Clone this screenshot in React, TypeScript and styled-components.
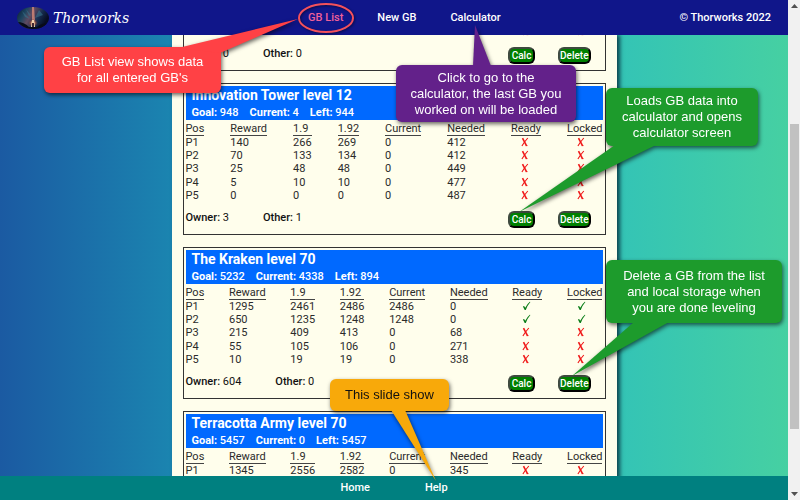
import React from "react";
import styled, { createGlobalStyle } from "styled-components";

const GlobalStyle = createGlobalStyle`
  * { box-sizing: border-box; }
  html, body { margin: 0; padding: 0; overflow: hidden; }
  body { font-family: Roboto, "Liberation Sans", sans-serif; font-size: 11px; color: #2b2b2b; }
`;

const Window = styled.div`
  position: relative;
  display: flex;
  height: 100vh;
`;

const Page = styled.div`
  flex: 1;
  min-width: 0;
  display: flex;
  flex-direction: column;
  background: linear-gradient(to right, #1b5aa2 0%, #1b85b0 22%, #34c4b5 79%, #46d0a2 100%);
`;

const Header = styled.header`
  flex: none;
  height: 35px;
  padding: 0 17px;
  display: flex;
  align-items: center;
  justify-content: space-between;
  background: #10168a;
  color: #fff;
  font-weight: 500;
`;

const Brand = styled.a`
  display: flex;
  align-items: center;
  gap: 4px;
  color: #fff;
  text-decoration: none;
  font: italic 14px/16px "DejaVu Serif", serif;
`;

const Nav = styled.nav<{ $gap: number }>`
  display: flex;
  gap: ${(p) => p.$gap}px;
`;

const NavLink = styled.a<{ $active?: boolean }>`
  position: relative;
  color: ${(p) => (p.$active ? "#f0609a" : "#fff")};
  text-decoration: none;
  font-weight: 500;
  line-height: 16px;
`;

const Main = styled.main`
  flex: 1;
  min-height: 0;
  overflow: hidden;
  display: flex;
  justify-content: center;
  align-items: flex-start;
`;

const List = styled.div`
  width: 445px;
  max-width: 100%;
  padding: 0 11px;
  display: flex;
  flex-direction: column;
  gap: 12px;
  background: #fffeec;
  box-shadow: 3px 0 4px rgba(0, 30, 50, 0.75);
`;

const Card = styled.section<{ $scrolled: boolean }>`
  height: ${(p) => (p.$scrolled ? 46 : 152)}px;
  margin-top: ${(p) => (p.$scrolled ? -10 : 0)}px;
  padding: ${(p) => (p.$scrolled ? "0 2px 2px" : "2px")};
  border: 1px solid #333;
  border-top-width: ${(p) => (p.$scrolled ? 0 : 1)}px;
`;

const CardHead = styled.div`
  height: 34px;
  padding: 0 6px;
  background: #0069ff;
  color: #fff;
`;

const Title = styled.h2`
  margin: 0;
  font-size: 14px;
  line-height: 18px;
  font-weight: 700;
`;

const Facts = styled.div`
  display: flex;
  gap: 11px;
  line-height: 17px;
  font-weight: 500;
  b { font-weight: 700; }
`;

const Table = styled.table<{ $scrolled: boolean }>`
  display: grid;
  grid-template-columns: ${(p) => (p.$scrolled ? "44fr 61fr 49fr 49fr 61fr 62fr 55fr 36fr" : "repeat(8, auto)")};
  grid-template-rows: ${(p) => (p.$scrolled ? "13px" : "16px repeat(5, 1fr)")};
  justify-content: space-between;
  height: ${(p) => (p.$scrolled ? 13 : 82)}px;
  font-size: 11px;
  line-height: 13px;

  thead, tbody, tr { display: contents; }
  td { padding: 0; }
`;

const HeadCell = styled.th`
  padding: 2px 0 0;
  border-bottom: 1px solid #444;
  font-weight: 400;
  text-align: left;
`;

const MarkCell = styled.td`
  && { padding: 1px 0 0 10px; }
  svg { display: block; }
`;

const CardFoot = styled.div`
  display: flex;
  align-items: flex-start;
  gap: 34px;
  padding: 9px 12px 0 0;
  color: #111;
  line-height: 14px;
  b { font-weight: 500; }
`;

const Actions = styled.div`
  display: flex;
  gap: 23px;
  margin-left: auto;
`;

const ActionButton = styled.button`
  min-width: 27px;
  height: 17px;
  padding: 0;
  border: 2px outset #3f4a3f;
  border-radius: 6px;
  background: #008000;
  color: #fff;
  font: 500 10px/12px Roboto, "Liberation Sans", sans-serif;
`;

const Footer = styled.footer`
  flex: none;
  height: 24px;
  display: flex;
  align-items: center;
  justify-content: center;
  background: #008080;
`;

const Scrollbar = styled.div`
  width: 12px;
  display: flex;
  flex-direction: column;
  align-items: center;
  justify-content: space-between;
  padding: 4px 0;
  background: #f1f1f1;
`;

const Track = styled.div`
  flex: 1;
  width: 9px;
  display: grid;
  grid-template-rows: 24fr 63fr 13fr;
`;

const Thumb = styled.div`
  grid-row: 2;
  background: #c1c1c1;
`;

const Callout = styled.aside<{ $x: number; $y: number; $w: number; $h: number; $color: string; $text?: string }>`
  position: absolute;
  left: ${(p) => p.$x}px;
  top: ${(p) => p.$y}px;
  width: ${(p) => p.$w}px;
  height: ${(p) => p.$h}px;
  display: flex;
  align-items: center;
  justify-content: center;
  border-radius: 6px;
  background: ${(p) => p.$color};
  color: ${(p) => p.$text ?? "#fff"};
  font: 13px/16px "Liberation Sans", Arial, sans-serif;
  text-align: center;
  white-space: pre-line;
  filter: drop-shadow(1px 2px 2px rgba(0, 0, 0, 0.6));
  pointer-events: none;
`;

const Tail = styled.svg`
  position: absolute;
  left: 0;
  top: 0;
  width: 1px;
  height: 1px;
  overflow: visible;
`;

const Ring = styled.svg`
  position: absolute;
  left: 50%;
  top: 50%;
  transform: translate(-50%, -50%);
  filter: drop-shadow(1px 1px 1px rgba(0, 0, 0, 0.5));
`;

type Row = [string, number, number, number, number, number, boolean];
type Building = {
  name?: string;
  goal?: number;
  current?: number;
  left?: number;
  owner?: number;
  other?: number;
  rows: Row[];
};

const buildings: Building[] = [
  {
    owner: 0, other: 0,
    rows: [["P5", 15, 29, 29, 0, 1082, false]],
  },
  {
    name: "Innovation Tower level 12", goal: 948, current: 4, left: 944, owner: 3, other: 1,
    rows: [
      ["P1", 140, 266, 269, 0, 412, false],
      ["P2", 70, 133, 134, 0, 412, false],
      ["P3", 25, 48, 48, 0, 449, false],
      ["P4", 5, 10, 10, 0, 477, false],
      ["P5", 0, 0, 0, 0, 487, false],
    ],
  },
  {
    name: "The Kraken level 70", goal: 5232, current: 4338, left: 894, owner: 604, other: 0,
    rows: [
      ["P1", 1295, 2461, 2486, 2486, 0, true],
      ["P2", 650, 1235, 1248, 1248, 0, true],
      ["P3", 215, 409, 413, 0, 68, false],
      ["P4", 55, 105, 106, 0, 271, false],
      ["P5", 10, 19, 19, 0, 338, false],
    ],
  },
  {
    name: "Terracotta Army level 70", goal: 5457, current: 0, left: 5457,
    rows: [["P1", 1345, 2556, 2582, 0, 345, false]],
  },
];

const columns = ["Pos", "Reward", "1.9", "1.92", "Current", "Needed", "Ready", "Locked"];

const Mark = ({ ok }: { ok: boolean }) =>
  ok ? (
    <svg width="9" height="10" viewBox="0 0 8 10" role="img" aria-label="yes">
      <path d="M0.4 5.6 L1.6 5.1 L2.7 6.8 Q4.5 3.2 7.3 0.8 L7.9 1.1 Q4.9 4.5 3.3 9 L2.2 9 Z" fill="#0a7d18" />
    </svg>
  ) : (
    <svg width="8" height="10" viewBox="0 0 8 10" role="img" aria-label="no">
      <path d="M1.5 1.2 Q3 4 5.6 8.8" fill="none" stroke="#f01818" strokeWidth="1.6" />
      <path d="M6.8 1 Q3.6 4.6 0.9 9" fill="none" stroke="#f01818" strokeWidth="1.1" />
      <path d="M4.8 8.6 H6.4" fill="none" stroke="#f01818" strokeWidth="1" />
    </svg>
  );

const Logo = () => (
  <svg width="32" height="22" viewBox="0 0 32 22" aria-hidden="true">
    <defs>
      <linearGradient id="sky" x1="0" x2="1" y1="0" y2="0.4">
        <stop offset="0" stopColor="#0a1830" />
        <stop offset="0.3" stopColor="#1d4560" />
        <stop offset="0.5" stopColor="#604a60" />
        <stop offset="0.75" stopColor="#162d50" />
        <stop offset="1" stopColor="#070c22" />
      </linearGradient>
      <radialGradient id="glow">
        <stop offset="0" stopColor="#ffe0b8" />
        <stop offset="0.4" stopColor="#a8604c" />
        <stop offset="1" stopColor="#60303c" stopOpacity="0" />
      </radialGradient>
      <clipPath id="oval"><ellipse cx="16" cy="11" rx="16" ry="11" /></clipPath>
    </defs>
    <g clipPath="url(#oval)">
      <rect width="32" height="22" fill="url(#sky)" />
      <path d="M5 4 L13 12 L8 10 Z M9 2 L14 8 L12 9 Z M22 3 L18 11 L26 8 Z" fill="#39718a" opacity="0.6" />
      <path d="M15 0 H17 L18 14 H15 Z" fill="#d68878" opacity="0.8" />
      <ellipse cx="16" cy="16" rx="5" ry="4" fill="url(#glow)" />
      <path d="M0 22 V15 Q7 15 12 20 L20 20 Q25 15 32 17 V22 Z" fill="#080b18" />
      <path d="M15 13 H17 L18 20 H14 Z" fill="#f3d4ad" />
      <path d="M15 16 H17 V20 H15 Z" fill="#412630" />
    </g>
  </svg>
);

const BuildingCard = ({ b }: { b: Building }) => {
  const scrolled = b.name === undefined;
  return (
    <Card $scrolled={scrolled}>
      {!scrolled && (
        <CardHead>
          <Title>{b.name}</Title>
          <Facts>
            <span><b>Goal:</b> {b.goal}</span>
            <span><b>Current:</b> {b.current}</span>
            <span><b>Left:</b> {b.left}</span>
          </Facts>
        </CardHead>
      )}
      <Table $scrolled={scrolled}>
        {!scrolled && (
          <thead>
            <tr>{columns.map((c) => <HeadCell key={c} scope="col">{c}</HeadCell>)}</tr>
          </thead>
        )}
        <tbody>
          {b.rows.map(([pos, reward, low, high, current, needed, ok]) => (
            <tr key={pos}>
              <td>{pos}</td>
              <td>{reward}</td>
              <td>{low}</td>
              <td>{high}</td>
              <td>{current}</td>
              <td>{needed}</td>
              <MarkCell><Mark ok={ok} /></MarkCell>
              <MarkCell><Mark ok={ok} /></MarkCell>
            </tr>
          ))}
        </tbody>
      </Table>
      {b.owner !== undefined && (
        <CardFoot>
          <span><b>Owner:</b> {b.owner}</span>
          <span><b>Other:</b> {b.other}</span>
          <Actions>
            <ActionButton type="button">Calc</ActionButton>
            <ActionButton type="button">Delete</ActionButton>
          </Actions>
        </CardFoot>
      )}
    </Card>
  );
};

const RED = "#ff4145";
const PURPLE = "#63218a";
const GREEN = "#1d9b2c";
const ORANGE = "#f8a90a";

export default function App() {
  return (
    <>
      <GlobalStyle />
      <Window>
        <Page>
          <Header>
            <Brand href="#home"><Logo />Thorworks</Brand>
            <Nav $gap={34}>
              <NavLink href="#list" $active>
                GB List
                <Ring width="58" height="32" viewBox="0 0 58 32" aria-hidden="true">
                  <ellipse cx="29" cy="16" rx="27" ry="14" fill="none" stroke="#f4515c" strokeWidth="2" />
                </Ring>
              </NavLink>
              <NavLink href="#new">New GB</NavLink>
              <NavLink href="#calculator">Calculator</NavLink>
            </Nav>
            <span>© Thorworks 2022</span>
          </Header>
          <Main>
            <List>{buildings.map((b, i) => <BuildingCard key={i} b={b} />)}</List>
          </Main>
          <Footer>
            <Nav $gap={55}>
              <NavLink href="#home">Home</NavLink>
              <NavLink href="#help">Help</NavLink>
            </Nav>
          </Footer>
        </Page>
        <Scrollbar aria-hidden="true">
          <svg width="7" height="4" viewBox="0 0 7 4"><path d="M0 4 L3.5 0 L7 4 Z" fill="#505050" /></svg>
          <Track><Thumb /></Track>
          <svg width="7" height="4" viewBox="0 0 7 4"><path d="M0 0 L3.5 4 L7 0 Z" fill="#505050" /></svg>
        </Scrollbar>

        <Callout $x={44} $y={47} $w={177} $h={46} $color={RED}>
          <Tail aria-hidden="true"><path d="M134 1 L254 -28 L176 6 Z" fill={RED} /></Tail>
          {"GB List view shows data\nfor all entered GB's"}
        </Callout>
        <Callout $x={396} $y={65} $w={180} $h={57} $color={PURPLE}>
          <Tail aria-hidden="true"><path d="M77 1 L79 -40 L95 1 Z" fill={PURPLE} /></Tail>
          {"Click to go to the\ncalculator, the last GB you\nworked on will be loaded"}
        </Callout>
        <Callout $x={606} $y={88} $w={152} $h={58} $color={GREEN}>
          <Tail aria-hidden="true"><path d="M9 57 L-87 124 L50 57 Z" fill={GREEN} /></Tail>
          {"Loads GB data into\ncalculator and opens\ncalculator screen"}
        </Callout>
        <Callout $x={606} $y={260} $w={176} $h={63} $color={GREEN}>
          <Tail aria-hidden="true"><path d="M28 62 L-34 116 L63 62 Z" fill={GREEN} /></Tail>
          {"Delete a GB from the list\nand local storage when\nyou are done leveling"}
        </Callout>
        <Callout $x={330} $y={379} $w={119} $h={32} $color={ORANGE} $text="#111">
          <Tail aria-hidden="true"><path d="M61 31 L106 102 L75 31 Z" fill={ORANGE} /></Tail>
          This slide show
        </Callout>
      </Window>
    </>
  );
}
